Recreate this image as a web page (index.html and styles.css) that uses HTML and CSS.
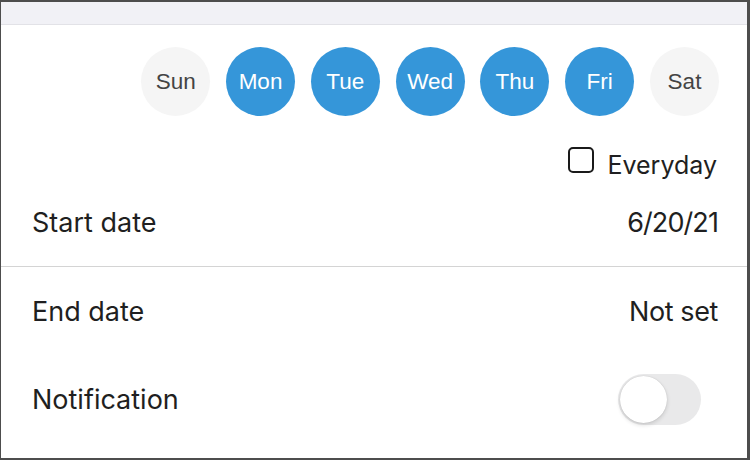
FILE: index.html
```html
<!DOCTYPE html>
<html>
<head>
<meta charset="utf-8">
<link rel="stylesheet" href="styles.css">
</head>
<body>
<div class="frame">
  <div class="topbar"></div>
  <div class="days">
    <div class="day">Sun</div>
    <div class="day on">Mon</div>
    <div class="day on">Tue</div>
    <div class="day on">Wed</div>
    <div class="day on">Thu</div>
    <div class="day on">Fri</div>
    <div class="day">Sat</div>
  </div>
  <div class="everyday">
    <span class="box"></span>
    <span class="label">Everyday</span>
  </div>
  <div class="row divided">
    <span>Start date</span>
    <span class="date">6/20/21</span>
  </div>
  <div class="row">
    <span>End date</span>
    <span class="value">Not set</span>
  </div>
  <div class="row">
    <span>Notification</span>
    <span class="toggle"><span class="knob"></span></span>
  </div>
</div>
</body>
</html>
```
FILE: styles.css
```css
* { box-sizing: border-box; }
html, body { margin: 0; padding: 0; }
body { width: 750px; height: 460px; background: #4d4d4d; }
.frame {
  width: 750px;
  height: 460px;
  border: 2px solid #4d4d4d;
  border-left-width: 1px;
  border-right-width: 3px;
  background: #ffffff;
  font-family: Inter, "Noto Sans", sans-serif;
  color: #1f1f21;
  overflow: hidden;
}
.topbar {
  height: 23px;
  background: #f1f1f6;
  border-bottom: 1px solid #e2e2e7;
}
.days {
  display: flex;
  justify-content: flex-end;
  gap: 15.8px;
  margin-top: 22px;
  padding-right: 28px;
}
.day {
  width: 69px;
  height: 69px;
  border-radius: 50%;
  background: #f5f5f5;
  color: #444444;
  font-family: "Liberation Sans", Arial, sans-serif;
  font-size: 22.5px;
  display: flex;
  align-items: center;
  justify-content: center;
}
.day.on { background: #3596d9; color: #ffffff; }
.everyday {
  display: flex;
  justify-content: flex-end;
  align-items: center;
  gap: 13px;
  padding-right: 30px;
  padding-top: 36px;
  height: 62px;
}
.box {
  width: 26px;
  height: 26px;
  border: 2px solid #1a1a1a;
  border-radius: 5px;
  margin-top: -10px;
}
.label { font-size: 25px; line-height: 28px; }
.row {
  height: 88px;
  display: flex;
  align-items: center;
  justify-content: space-between;
  padding: 0 29px 0 31px;
  font-size: 27px;
}
.row.divided { border-bottom: 1px solid #d4d4d4; height: 89px; }
.date { letter-spacing: -0.9px; }
.value { letter-spacing: -0.4px; }
.toggle {
  width: 83px;
  height: 51px;
  border-radius: 26px;
  background: #e9e9ea;
  margin-right: 17px;
  padding: 2px;
  display: flex;
}
.knob {
  width: 47px;
  height: 47px;
  border-radius: 50%;
  background: #ffffff;
  box-shadow: 0 2px 4px rgba(0,0,0,0.14), 0 0 1px rgba(0,0,0,0.2);
}
```
